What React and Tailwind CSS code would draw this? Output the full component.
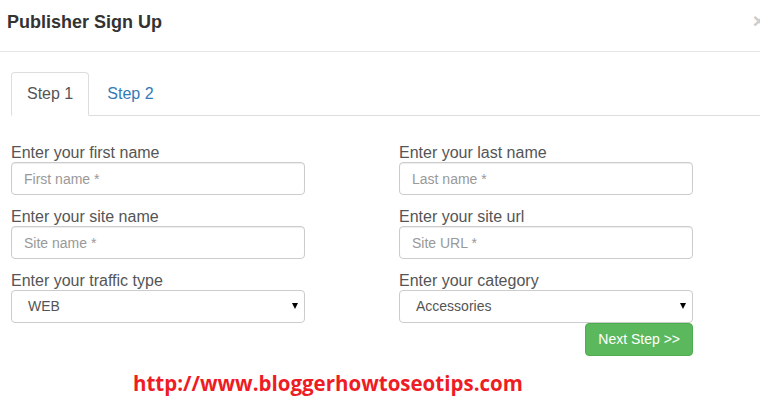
import React from "react";

const font = { fontFamily: '"Liberation Sans", Arial, sans-serif' };

function Field({ label, placeholder }) {
  return (
    <div className="flex flex-col">
      <label className="text-[16px] leading-[18px] h-[18px] text-[#555]">{label}</label>
      <input
        className="h-[33px] w-full rounded-[4px] border border-[#ccc] bg-white px-[12px] text-[14px] text-[#555] placeholder:text-[#999] outline-none shadow-[inset_0_1px_1px_rgba(0,0,0,0.075)]"
        placeholder={placeholder}
      />
    </div>
  );
}

function SelectField({ label, value }) {
  return (
    <div className="flex flex-col">
      <label className="text-[16px] leading-[18px] h-[18px] text-[#555]">{label}</label>
      <div className="relative h-[33px]">
        <select
          defaultValue={value}
          className="h-[33px] w-full appearance-none rounded-[4px] border border-[#ccc] bg-white pl-[16px] text-[14px] text-[#555] outline-none"
        >
          <option>{value}</option>
        </select>
        <span className="pointer-events-none absolute right-[7px] top-[13px] h-0 w-0 border-l-[3px] border-r-[3px] border-t-[6px] border-l-transparent border-r-transparent border-t-black" />
      </div>
    </div>
  );
}

export default function App() {
  return (
    <div className="w-[760px] h-[415px] overflow-hidden bg-white text-[#333]" style={font}>
      <div className="flex h-[52px] justify-between border-b border-[#e5e5e5] pl-[7px] pt-[12px]">
        <h4 className="text-[18px] leading-[20px] font-bold text-[#333]">Publisher Sign Up</h4>
        <span className="-mr-[5px] -mt-[1px] text-[21px] leading-[20px] font-bold text-[#ccc]">×</span>
      </div>

      <div className="mt-[20px] ml-[11px] flex h-[44px] border-b border-[#ddd]">
        <div className="-mb-px flex h-[44px] items-center rounded-t-[4px] border border-[#ddd] border-b-white bg-white px-[15px] text-[16px] text-[#555]">
          Step 1
        </div>
        <div className="ml-[2px] flex h-[43px] items-center px-[16px] text-[16px] text-[#337ab7]">
          Step 2
        </div>
      </div>

      <div className="mx-[11px] mt-[28px] w-[682px]">
        <div className="grid grid-cols-2 gap-x-[94px] gap-y-[13px]">
          <Field label="Enter your first name" placeholder="First name *" />
          <Field label="Enter your last name" placeholder="Last name *" />
          <Field label="Enter your site name" placeholder="Site name *" />
          <Field label="Enter your site url" placeholder="Site URL *" />
          <SelectField label="Enter your traffic type" value="WEB" />
          <SelectField label="Enter your category" value="Accessories" />
        </div>
        <div className="flex justify-end">
          <button className="h-[33px] rounded-[4px] border border-[#4cae4c] bg-[#5cb85c] px-[12px] text-[14px] text-white">
            Next Step &gt;&gt;
          </button>
        </div>
      </div>

      <div
        className="mt-[16px] pl-[133px] text-[20.5px] leading-[22px] font-bold text-[#ee1c24]"
        style={{ fontFamily: '"Open Sans", sans-serif' }}
      >
        http://www.bloggerhowtoseotips.com
      </div>
    </div>
  );
}
